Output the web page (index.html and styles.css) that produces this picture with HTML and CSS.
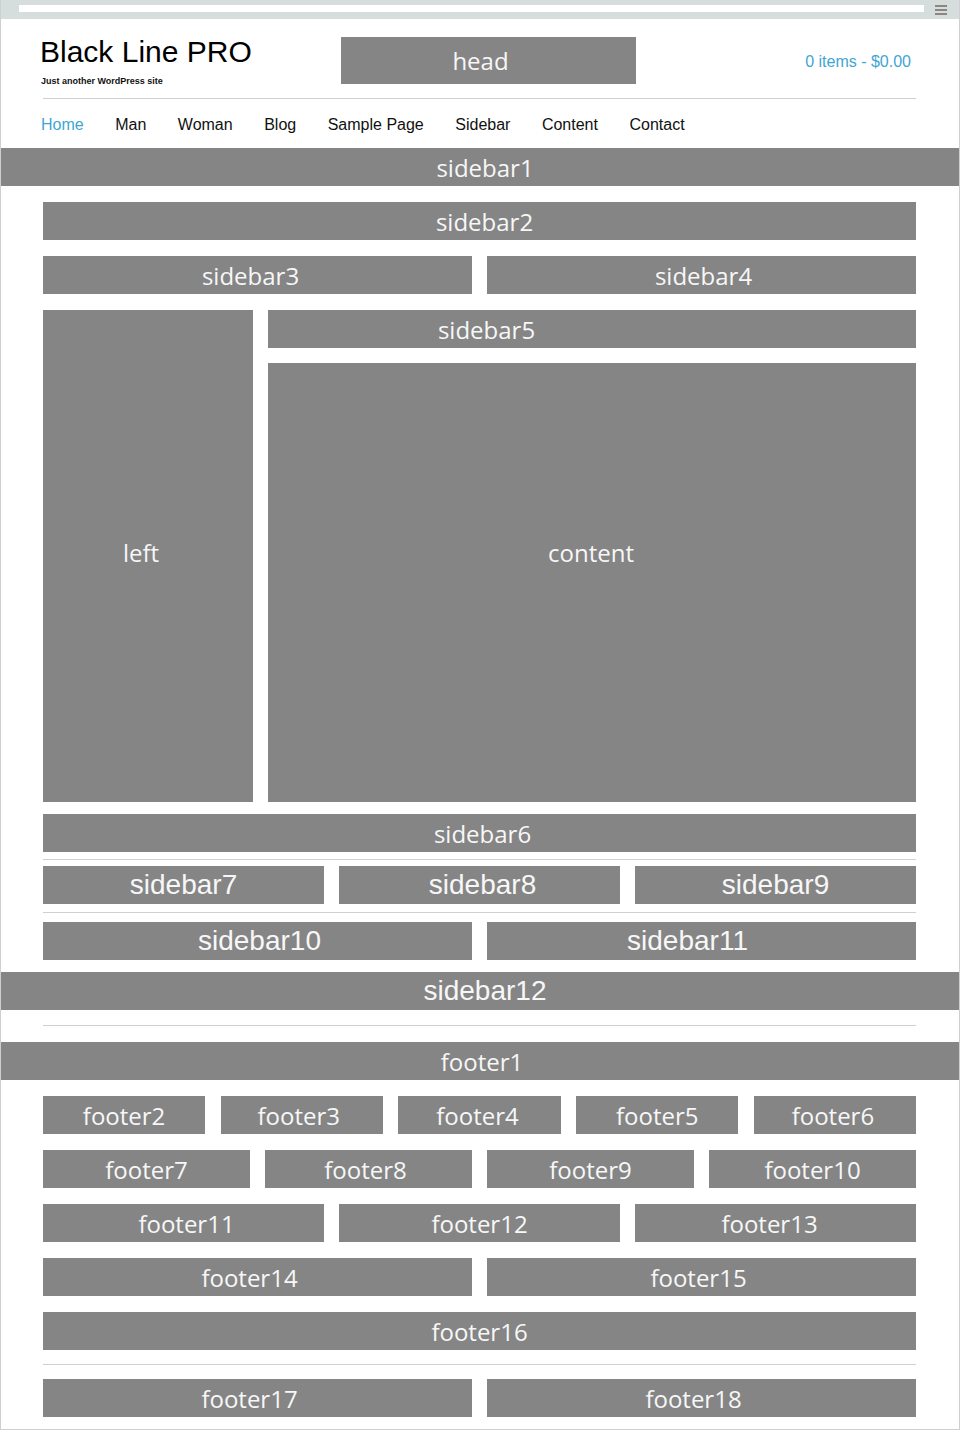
FILE: index.html
```html
<!DOCTYPE html>
<html lang="en">
<head>
  <meta charset="UTF-8" />
  <meta name="viewport" content="width=device-width, initial-scale=1.0"/>
  <title>Black Line PRO</title>
  <link rel="stylesheet" href="styles.css">
</head>
<body>
  <div class="page">
    <!-- top bar -->
    <div class="topbar">
      <div class="topbar-field"></div>
      <span class="menu-icon"><i></i><i></i><i></i></span>
    </div>

    <header class="site-header">
      <div class="branding">
        <h1>Black Line PRO</h1>
        <p>Just another WordPress site</p>
      </div>
      <div class="box head l8">head</div>
      <a class="cart" href="#">0 items - $0.00</a>
    </header>

    <div class="inner"><hr class="rule"></div>

    <nav class="menu">
      <a class="active" href="#">Home</a>
      <a href="#">Man</a>
      <a href="#">Woman</a>
      <a href="#">Blog</a>
      <a href="#">Sample Page</a>
      <a href="#">Sidebar</a>
      <a href="#">Content</a>
      <a href="#">Contact</a>
    </nav>

    <div class="box r5">sidebar1</div>

    <div class="inner top-area">
      <div class="box r5">sidebar2</div>
      <div class="row cols-2 gap-16">
        <div class="box l7">sidebar3</div>
        <div class="box r2">sidebar4</div>
      </div>
      <div class="main gap-16">
        <div class="box left l7">left</div>
        <div class="main-right">
          <div class="box sidebar5">sidebar5</div>
          <div class="box content">content</div>
        </div>
      </div>
      <div class="box after-main r3">sidebar6</div>
      <hr class="rule rule-a">
      <div class="row cols-3 arial">
        <div class="box">sidebar7</div>
        <div class="box r3">sidebar8</div>
        <div class="box">sidebar9</div>
      </div>
      <hr class="rule rule-b">
      <div class="row cols-2 arial gap-9">
        <div class="box r2">sidebar10</div>
        <div class="box l14">sidebar11</div>
      </div>
    </div>

    <div class="box arial sidebar12 r5">sidebar12</div>

    <div class="inner rule-wrap"><hr class="rule"></div>

    <div class="box r2">footer1</div>

    <div class="inner footer-area">
      <div class="row cols-5">
        <div class="box">footer2</div>
        <div class="box l3">footer3</div>
        <div class="box l2">footer4</div>
        <div class="box">footer5</div>
        <div class="box l2">footer6</div>
      </div>
      <div class="row cols-4 gap-16">
        <div class="box">footer7</div>
        <div class="box l3">footer8</div>
        <div class="box">footer9</div>
        <div class="box">footer10</div>
      </div>
      <div class="row cols-3 gap-16">
        <div class="box r3">footer11</div>
        <div class="box">footer12</div>
        <div class="box l6">footer13</div>
      </div>
      <div class="row cols-2 gap-16">
        <div class="box l8">footer14</div>
        <div class="box l3">footer15</div>
      </div>
      <div class="box gap-16">footer16</div>
      <hr class="rule rule-c">
      <div class="row cols-2 gap-14">
        <div class="box l8">footer17</div>
        <div class="box l8">footer18</div>
      </div>
    </div>
  </div>
</body>
</html>
```

FILE: styles.css
```css
* {
  box-sizing: border-box;
}

body {
  margin: 0;
  background: #fff;
  font-family: 'Liberation Sans', Arial, sans-serif;
}

.page {
  width: 960px;
  border: 1px solid #cfcfcf;
  border-top: none;
  padding-bottom: 12px;
  box-shadow: 0 1px 2px rgba(0, 0, 0, 0.15);
}

/* top bar */
.topbar {
  height: 19px;
  background: #d6dddd;
  position: relative;
}

.topbar-field {
  position: absolute;
  left: 18px;
  top: 5px;
  width: 905px;
  height: 7px;
  background: #fff;
}

.menu-icon {
  position: absolute;
  left: 934px;
  top: 5px;
  width: 12px;
  display: flex;
  flex-direction: column;
  gap: 2px;
}

.menu-icon i {
  display: block;
  height: 2px;
  background: #8b8682;
}

/* header */
.site-header {
  display: flex;
  align-items: flex-start;
  padding: 18px 48px 11px 39px;
}

.branding {
  width: 301px;
}

.branding h1 {
  margin: 0;
  font-size: 30px;
  line-height: 30px;
  font-weight: normal;
  color: #000;
}

.branding p {
  margin: 9px 0 0 1px;
  font-size: 9px;
  line-height: 11px;
  font-weight: bold;
  color: #111;
}

.site-header .head {
  width: 295px;
  height: 47px;
}

.cart {
  flex: 1;
  text-align: right;
  margin-top: 16px;
  font-size: 16px;
  line-height: 18px;
  color: #3fa6d2;
  text-decoration: none;
}

.inner {
  padding: 0 43px 0 42px;
}

.rule {
  margin: 0;
  border: none;
  border-top: 1px solid #d0d0d0;
  height: 0;
}

/* nav */
.menu {
  display: flex;
  gap: 31.5px;
  padding: 17px 0 14px 40px;
}

.menu a {
  font-size: 16px;
  line-height: 18px;
  color: #111;
  text-decoration: none;
}

.menu a.active {
  color: #3fa6d2;
}

/* grey blocks */
.box {
  height: 38px;
  background: #858585;
  color: #f7f7f7;
  display: flex;
  align-items: center;
  justify-content: center;
  font-family: 'Open Sans', sans-serif;
  font-size: 24px;
}

.arial .box,
.box.arial {
  font-family: 'Liberation Sans', Arial, sans-serif;
  font-size: 28px;
}

/* label offsets, the labels are not quite centred */
.r2 { padding-left: 4px; }
.r3 { padding-left: 6px; }
.r5 { padding-left: 10px; }
.l2 { padding-right: 4px; }
.l3 { padding-right: 6px; }
.l6 { padding-right: 12px; }
.l7 { padding-right: 14px; }
.l8 { padding-right: 16px; }
.l14 { padding-right: 28px; }

.top-area {
  padding-top: 16px;
}

.row {
  display: grid;
  gap: 15px;
}

.cols-2 { grid-template-columns: 1fr 1fr; }
.cols-3 { grid-template-columns: 1fr 1fr 1fr; }
.cols-4 { grid-template-columns: repeat(4, 1fr); }
.cols-5 { grid-template-columns: repeat(5, 1fr); gap: 15.5px; }

.gap-16 { margin-top: 16px; }
.gap-14 { margin-top: 14px; }
.gap-9 { margin-top: 9px; }

.main {
  display: flex;
  gap: 15px;
  height: 492px;
}

.main .left {
  width: 210px;
  height: auto;
  padding-bottom: 8px;
}

.main-right {
  flex: 1;
  display: flex;
  flex-direction: column;
  gap: 15px;
}

.main-right .sidebar5 {
  padding-right: 211px;
}

.main-right .content {
  flex: 1;
  height: auto;
  padding: 0 2px 60px 0;
}

.after-main {
  margin-top: 12px;
}

.rule-a {
  margin: 7px 0 6px;
}

.rule-b {
  margin-top: 8px;
}

.sidebar12 {
  margin-top: 12px;
}

.rule-wrap {
  padding-top: 15px;
  padding-bottom: 16px;
}

.footer-area {
  padding-top: 16px;
}

.rule-c {
  margin-top: 14px;
}
```
